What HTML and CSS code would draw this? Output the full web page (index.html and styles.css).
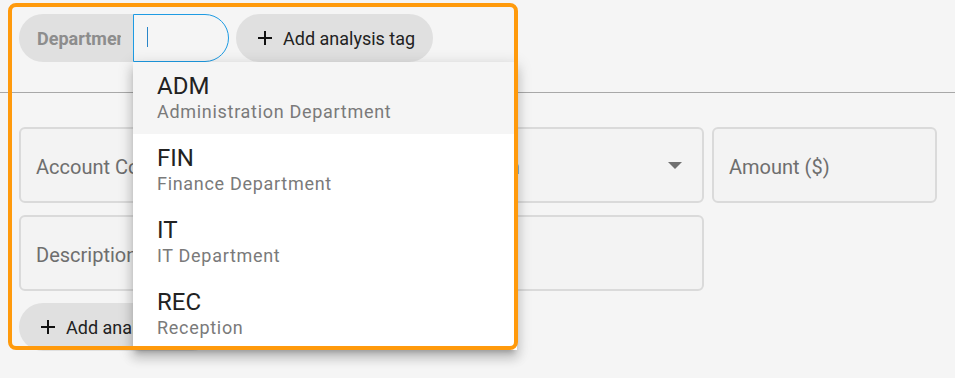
FILE: index.html
```html
<!DOCTYPE html>
<html lang="en">
<head>
  <meta charset="UTF-8">
  <meta name="viewport" content="width=device-width, initial-scale=1.0">
  <title>Journal Entry</title>
  <link rel="stylesheet" href="styles.css">
</head>
<body>
  <div class="page">
    <header class="tags">
      <div class="tag-edit">
        <span class="chip chip-key"><span class="chip-key-text">Department</span></span>
        <span class="tag-input"><span class="caret"></span></span>

        <ul class="menu">
          <li class="menu-item active">
            <span class="item-title">ADM</span>
            <span class="item-sub">Administration Department</span>
          </li>
          <li class="menu-item">
            <span class="item-title">FIN</span>
            <span class="item-sub">Finance Department</span>
          </li>
          <li class="menu-item">
            <span class="item-title">IT</span>
            <span class="item-sub">IT Department</span>
          </li>
          <li class="menu-item">
            <span class="item-title">REC</span>
            <span class="item-sub">Reception</span>
          </li>
        </ul>
      </div>

      <button class="chip chip-add" type="button">
        <svg class="plus" width="14" height="14" viewBox="0 0 14 14"><path d="M7 0v14M0 7h14" stroke="#111" stroke-width="2"/></svg>
        Add analysis tag
      </button>
    </header>

    <main class="form">
      <div class="fields">
        <div class="field">Account Code</div>
        <div class="field field-select span-2">
          <span>Debit or Credit Classification</span>
          <span class="arrow"></span>
        </div>
        <div class="field">Amount ($)</div>
        <div class="field span-3">Description</div>
      </div>

      <button class="chip chip-add" type="button">
        <svg class="plus" width="14" height="14" viewBox="0 0 14 14"><path d="M7 0v14M0 7h14" stroke="#111" stroke-width="2"/></svg>
        Add analysis tag
      </button>
    </main>

    <div class="highlight"></div>
  </div>
</body>
</html>
```

FILE: styles.css
```css
* {
  box-sizing: border-box;
}

body {
  margin: 0;
  background-color: #f5f5f5;
  font-family: Roboto, 'Noto Sans', sans-serif;
  color: #222;
}

.page {
  position: relative;
  height: 378px;
  overflow: hidden;
}

.tags {
  display: flex;
  align-items: flex-start;
  gap: 7px;
  height: 93px;
  padding: 14px 0 0 19px;
  border-bottom: 1px solid #a8a8a8;
}

.tag-edit {
  position: relative;
  display: flex;
}

.chip {
  display: flex;
  align-items: center;
  height: 48px;
  border: none;
  background-color: #e0e0e0;
  font-family: inherit;
}

.chip-key {
  width: 114px;
  padding-left: 18px;
  border-radius: 24px 0 0 24px;
}

.chip-key-text {
  width: 84px;
  overflow: hidden;
  white-space: nowrap;
  font-size: 18px;
  font-weight: 700;
  color: #8d8d8d;
}

.tag-input {
  position: relative;
  width: 96px;
  height: 48px;
  border: 1.5px solid #1e9be3;
  border-radius: 0 24px 24px 0;
}

.caret {
  position: absolute;
  left: 13px;
  top: 12px;
  width: 1px;
  height: 20px;
  background-color: #2a86c8;
}

.chip-add {
  gap: 11px;
  padding: 0 18px 0 22px;
  border-radius: 24px;
  font-size: 18px;
  color: #222;
}

.menu {
  position: absolute;
  top: 48px;
  left: 114px;
  z-index: 2;
  width: 384px;
  margin: 0;
  padding: 0;
  list-style: none;
  background-color: #fff;
  box-shadow: 0 5px 5px -3px rgba(0, 0, 0, 0.2), 0 8px 10px 1px rgba(0, 0, 0, 0.14), 0 3px 14px 2px rgba(0, 0, 0, 0.12);
}

.menu-item {
  display: flex;
  flex-direction: column;
  height: 72px;
  padding: 10px 24px 0;
}

.menu-item.active {
  background-color: #f5f5f5;
}

.item-title {
  font-size: 24px;
  line-height: 28px;
  color: #222;
}

.item-sub {
  margin-top: 1px;
  font-size: 18px;
  line-height: 22px;
  letter-spacing: 0.7px;
  color: #7a7a7a;
}

.form {
  padding: 34px 18px 0 19px;
}

.fields {
  display: grid;
  grid-template-columns: 1fr 1fr 1fr 225px;
  gap: 12px 8px;
}

.field {
  display: flex;
  align-items: center;
  height: 76px;
  padding: 3px 15px 0;
  border: 2px solid #dadada;
  border-radius: 6px;
  background-color: #f3f3f3;
  font-size: 20px;
  color: #6e6e6e;
  white-space: nowrap;
}

.span-2 {
  grid-column: span 2;
}

.span-3 {
  grid-column: span 3;
}

.field-select {
  justify-content: space-between;
  padding-right: 20px;
}

.arrow {
  width: 0;
  height: 0;
  margin-top: -3px;
  border-left: 7px solid transparent;
  border-right: 7px solid transparent;
  border-top: 7px solid #707070;
}

.form .chip-add {
  margin-top: 12px;
}

.highlight {
  position: absolute;
  left: 8px;
  top: 3px;
  z-index: 3;
  width: 510px;
  height: 347px;
  border: 4px solid #ff9a0c;
  border-radius: 8px;
  pointer-events: none;
}
```
